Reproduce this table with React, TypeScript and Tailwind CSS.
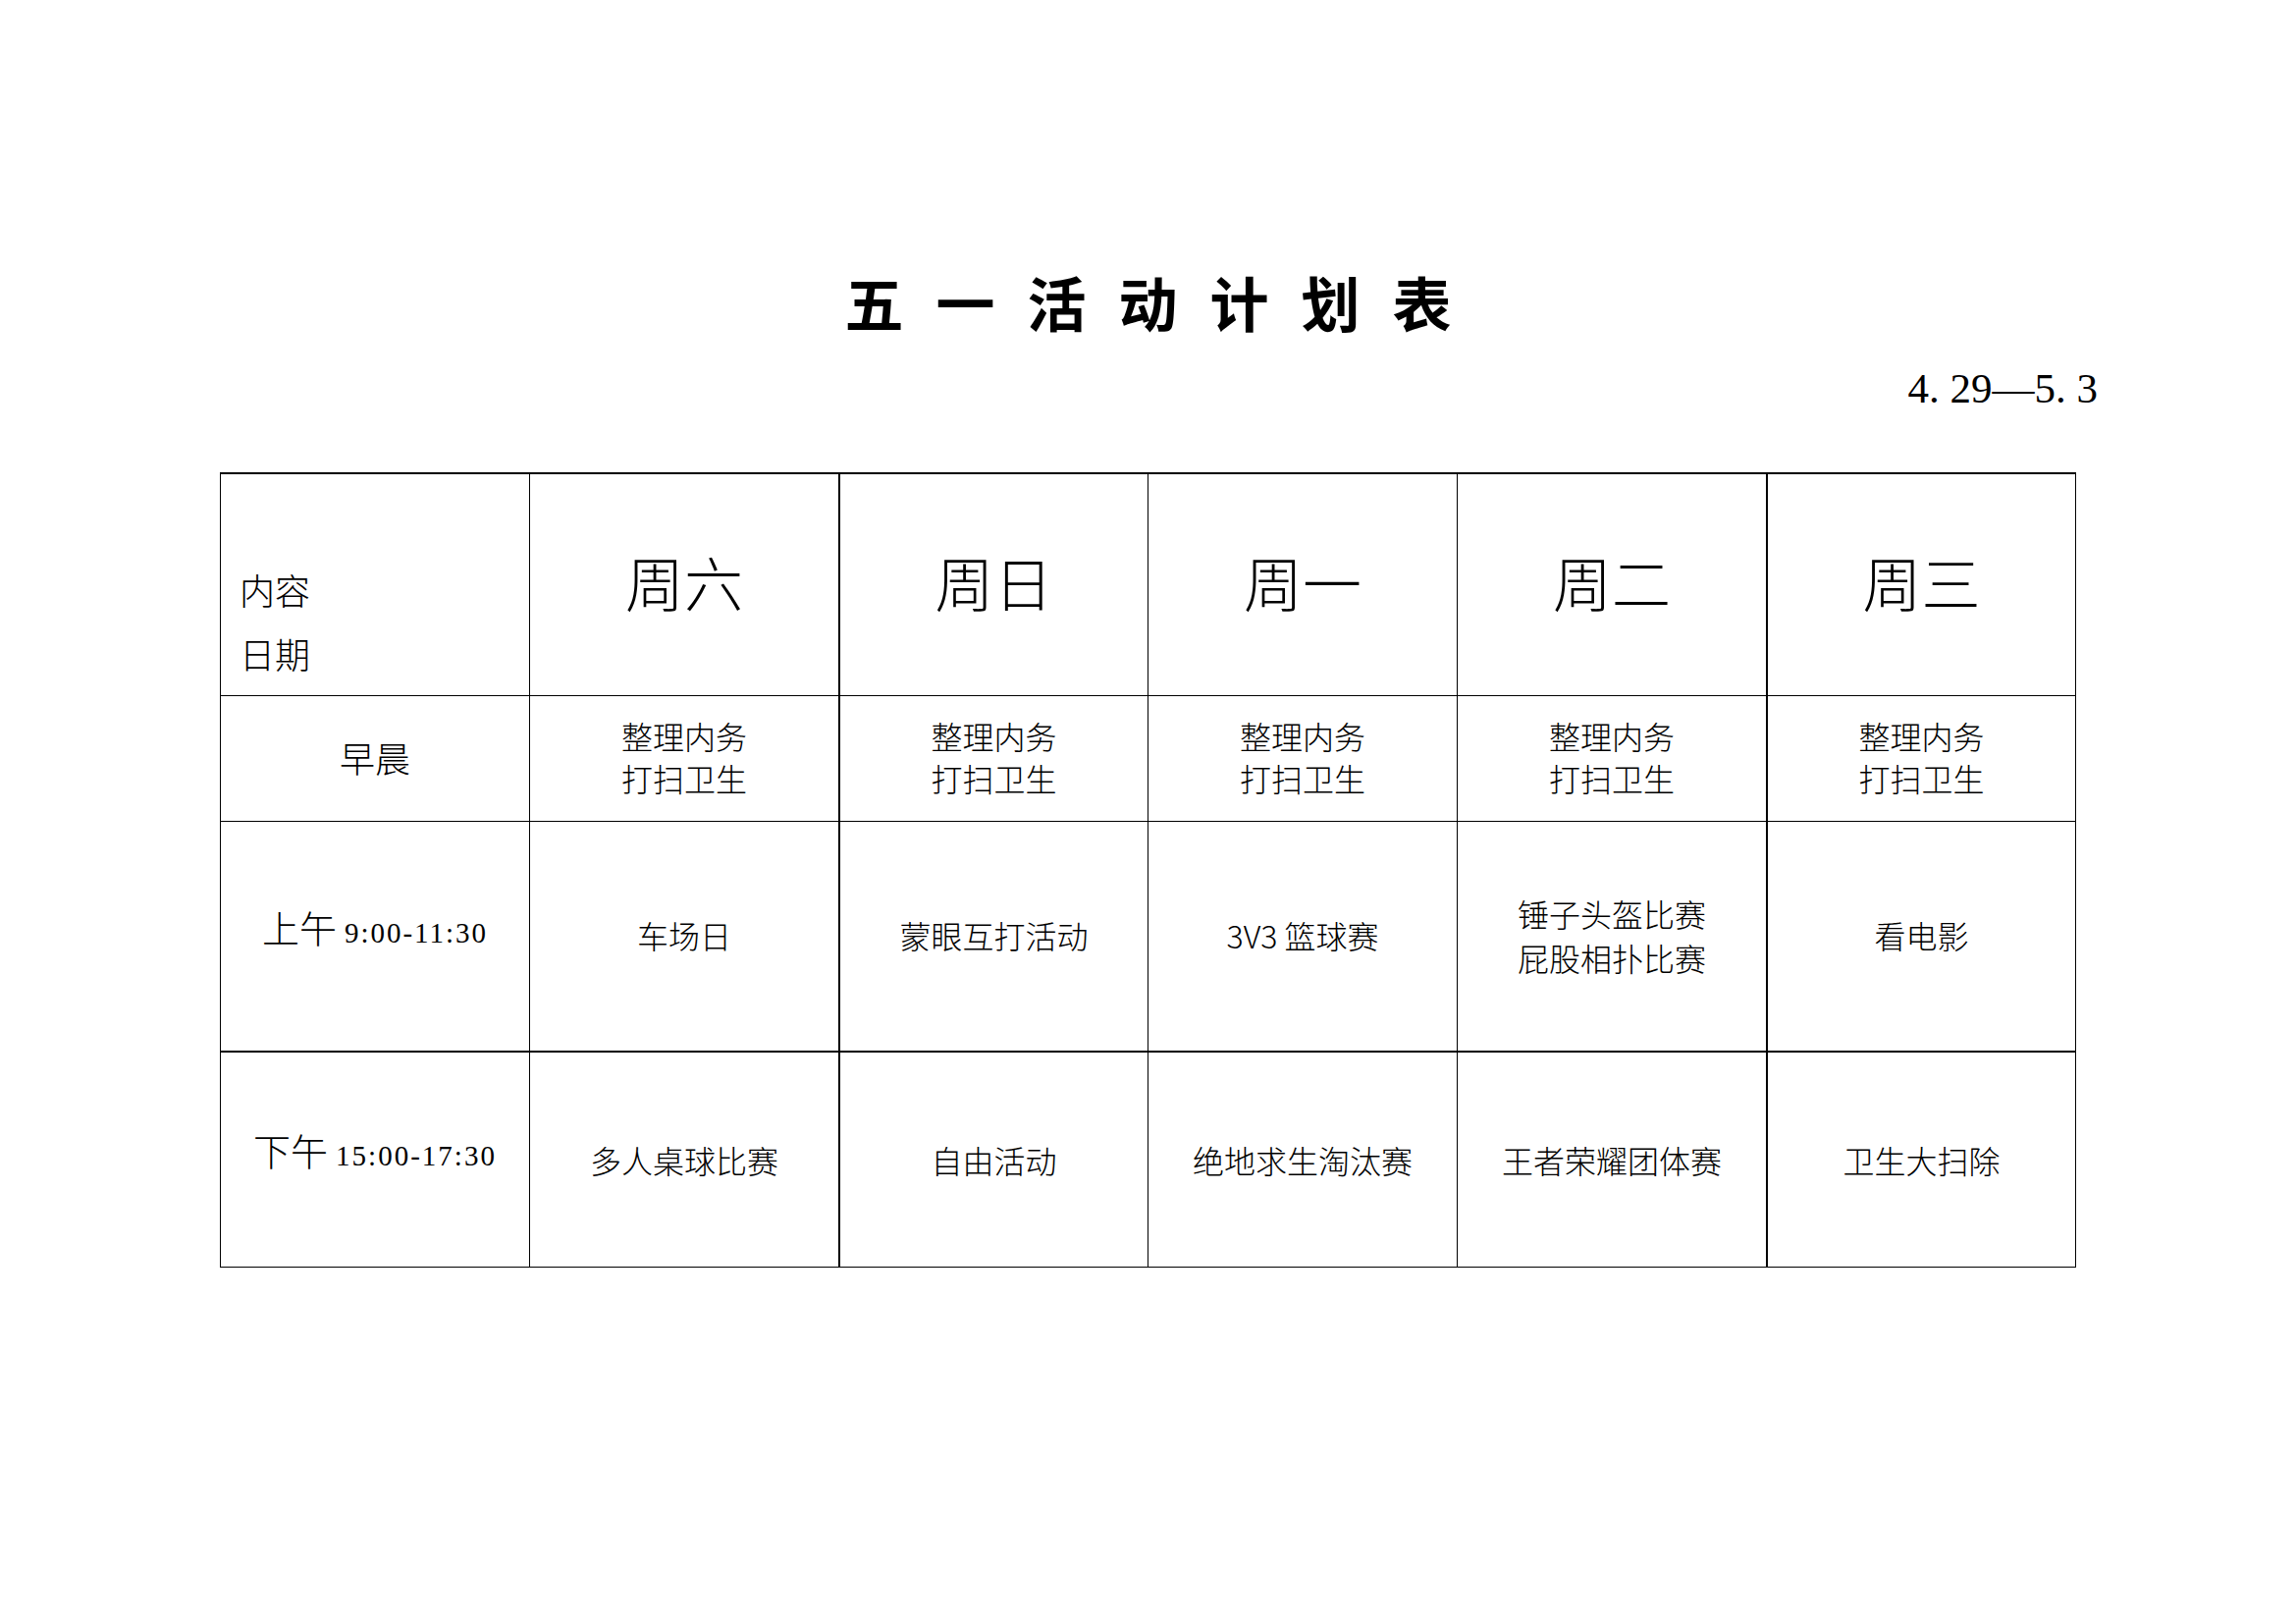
const cjk = "font-['Noto_Sans_CJK_SC',sans-serif]";

const days = ["周六", "周日", "周一", "周二", "周三"];
const morning = ["整理内务\n打扫卫生", "整理内务\n打扫卫生", "整理内务\n打扫卫生", "整理内务\n打扫卫生", "整理内务\n打扫卫生"];
const am = ["车场日", "蒙眼互打活动", "3V3 篮球赛", "锤子头盔比赛\n屁股相扑比赛", "看电影"];
const pm = ["多人桌球比赛", "自由活动", "绝地求生淘汰赛", "王者荣耀团体赛", "卫生大扫除"];

// right border per column (line after each column), matching the print
const colRight = [
  "border-r",
  "border-r-2",
  "border-r",
  "border-r",
  "border-r-2",
  "border-r",
];
const rowBottom = ["border-b", "border-b", "border-b-2", "border-b"];

function Cell({
  col,
  row,
  className = "",
  children,
}: {
  col: number;
  row: number;
  className?: string;
  children: React.ReactNode;
}) {
  return (
    <div className={`flex border-black ${colRight[col]} ${rowBottom[row]} ${className}`}>
      {children}
    </div>
  );
}

function Lines({ text, leading }: { text: string; leading: string }) {
  return (
    <div className={`flex flex-col items-center text-[32px] font-light ${leading}`}>
      {text.split("\n").map((l) => (
        <span key={l}>{l}</span>
      ))}
    </div>
  );
}

export default function App() {
  const title = ["五", "一", "活", "动", "计", "划", "表"];
  return (
    <div className={`min-h-[1654px] w-[2339px] bg-white text-black ${cjk}`}>
      <div className="ml-[224px] w-[1891px] pt-[277px]">
        <div className="flex justify-center gap-[33px] text-[60px] font-bold leading-[60px]">
          {title.map((c) => (
            <span key={c}>{c}</span>
          ))}
        </div>

        <div className="mr-[-22px] mt-[37px] flex justify-end font-['Liberation_Serif',serif] text-[43px] leading-[43px]">
          4. 29—5. 3
        </div>

        <div className="mt-[64px] grid grid-cols-[315px_316px_314px_315px_316px_314px] grid-rows-[226px_128px_235px_219px] border-l border-t-2 border-black">
          <Cell col={0} row={0} className="items-end pb-[10px] pl-[19px]">
            <div className="flex flex-col text-[36px] font-light leading-[65px]">
              <span>内容</span>
              <span>日期</span>
            </div>
          </Cell>
          {days.map((d, i) => (
            <Cell key={d} col={i + 1} row={0} className="items-center justify-center pb-[7px]">
              <span className="text-[60px] font-light leading-[60px]">{d}</span>
            </Cell>
          ))}

          <Cell col={0} row={1} className="items-center justify-center pb-[3px]">
            <span className="text-[36px] font-light">早晨</span>
          </Cell>
          {morning.map((t, i) => (
            <Cell key={i} col={i + 1} row={1} className="items-center justify-center pb-[3px]">
              <Lines text={t} leading="leading-[43px]" />
            </Cell>
          ))}

          <Cell col={0} row={2} className="items-center justify-center pb-[20px]">
            <div className="flex items-baseline">
              <span className="text-[38px] font-light">上午</span>
              <span className="ml-[8px] font-['Liberation_Serif',serif] text-[29px] tracking-[2px]">9:00-11:30</span>
            </div>
          </Cell>
          {am.map((t, i) => (
            <Cell key={i} col={i + 1} row={2} className="items-center justify-center pb-[2px]">
              <Lines text={t} leading="leading-[45px]" />
            </Cell>
          ))}

          <Cell col={0} row={3} className="items-center justify-center pb-[20px]">
            <div className="flex items-baseline">
              <span className="text-[38px] font-light">下午</span>
              <span className="ml-[8px] font-['Liberation_Serif',serif] text-[29px] tracking-[2px]">15:00-17:30</span>
            </div>
          </Cell>
          {pm.map((t, i) => (
            <Cell key={i} col={i + 1} row={3} className="items-center justify-center">
              <Lines text={t} leading="leading-[45px]" />
            </Cell>
          ))}
        </div>
      </div>
    </div>
  );
}
